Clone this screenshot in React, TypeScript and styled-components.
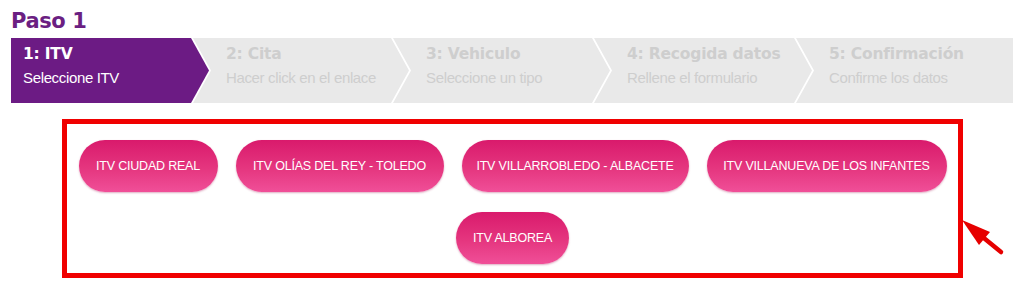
import React from 'react';
import styled, { createGlobalStyle } from 'styled-components';

const GlobalStyle = createGlobalStyle`
  html, body {
    margin: 0;
    padding: 0;
    background: #ffffff;
  }
  body {
    font-family: Tahoma, 'DejaVu Sans', 'Liberation Sans', sans-serif;
  }
`;

const Page = styled.div`
  width: 1024px;
  height: 289px;
  padding-top: 8px;
  box-sizing: border-box;
  overflow: hidden;
`;

const Title = styled.h2`
  margin: 0 0 3px 11px;
  font-family: 'DejaVu Sans', sans-serif;
  font-size: 21px;
  font-weight: 700;
  line-height: 27px;
  letter-spacing: -0.4px;
  color: #6b1f82;
`;

const Stepper = styled.div`
  display: flex;
  margin-left: 11px;
  width: 1002px;
  height: 65px;
`;

const ARROW = 18;

const Step = styled.div<{ $active?: boolean; $first?: boolean; $last?: boolean; $w: number }>`
  flex: 0 0 ${(p) => p.$w}px;
  margin-right: ${(p) => (p.$last ? 0 : -(ARROW - 2))}px;
  box-sizing: border-box;
  padding: 6px 0 0 ${(p) => (p.$first ? 12 : ARROW + 15)}px;
  background: ${(p) => (p.$active ? '#6c1b84' : '#e9e9e9')};
  color: ${(p) => (p.$active ? '#ffffff' : '#cecece')};
  clip-path: ${(p) =>
    p.$first
      ? `polygon(0 0, calc(100% - ${ARROW}px) 0, 100% 50%, calc(100% - ${ARROW}px) 100%, 0 100%)`
      : p.$last
      ? `polygon(0 0, 100% 0, 100% 100%, 0 100%, ${ARROW}px 50%)`
      : `polygon(0 0, calc(100% - ${ARROW}px) 0, 100% 50%, calc(100% - ${ARROW}px) 100%, 0 100%, ${ARROW}px 50%)`};
  position: relative;
  z-index: ${(p) => (p.$active ? 2 : 1)};
`;

const StepTitle = styled.div`
  font-family: 'DejaVu Sans', sans-serif;
  font-size: 15.5px;
  font-weight: 700;
  line-height: 21px;
  letter-spacing: -0.2px;
  white-space: nowrap;
`;

const StepText = styled.div`
  font-family: 'Liberation Sans', sans-serif;
  font-size: 15px;
  line-height: 20px;
  margin-top: 3px;
  letter-spacing: -0.35px;
  white-space: nowrap;
`;

const Frame = styled.div`
  position: relative;
  margin: 16px 0 0 62px;
  width: 901px;
  height: 159px;
  box-sizing: border-box;
  border: 5px solid #f00000;
  padding: 16px 0 0;
`;

const ButtonGrid = styled.div`
  display: flex;
  flex-wrap: wrap;
  justify-content: center;
  column-gap: 18px;
  row-gap: 20px;
`;

const ItvButton = styled.button<{ $w: number }>`
  width: ${(p) => p.$w}px;
  height: 52px;
  border: none;
  border-radius: 26px;
  background: linear-gradient(to bottom, #d91a6c 0%, #e5367f 55%, #f04f98 100%);
  box-shadow: 0 1px 2px rgba(160, 20, 80, 0.35);
  color: #ffffff;
  font-family: 'Liberation Sans', sans-serif;
  font-size: 12.5px;
  letter-spacing: -0.2px;
  text-transform: uppercase;
  white-space: nowrap;
  cursor: pointer;
`;

const Pointer = styled.svg`
  position: absolute;
  left: 893px;
  top: 93px;
  width: 50px;
  height: 45px;
  overflow: visible;
`;

const steps = [
  { title: '1: ITV', text: 'Seleccione ITV', w: 198 },
  { title: '2: Cita', text: 'Hacer click en el enlace', w: 216 },
  { title: '3: Vehiculo', text: 'Seleccione un tipo', w: 217 },
  { title: '4: Recogida datos', text: 'Rellene el formulario', w: 218 },
  { title: '5: Confirmación', text: 'Confirme los datos', w: 217 },
];

const itvs = [
  { name: 'ITV Ciudad Real', w: 139 },
  { name: 'ITV Olías del Rey - Toledo', w: 208 },
  { name: 'ITV Villarrobledo - Albacete', w: 227 },
  { name: 'ITV Villanueva de los Infantes', w: 240 },
  { name: 'ITV Alborea', w: 113 },
];

export default function App() {
  return (
    <Page>
      <GlobalStyle />
      <Title>Paso 1</Title>
      <Stepper>
        {steps.map((s, i) => (
          <Step
            key={s.title}
            $w={s.w}
            $active={i === 0}
            $first={i === 0}
            $last={i === steps.length - 1}
          >
            <StepTitle>{s.title}</StepTitle>
            <StepText>{s.text}</StepText>
          </Step>
        ))}
      </Stepper>
      <Frame>
        <ButtonGrid>
          {itvs.map((itv) => (
            <ItvButton key={itv.name} $w={itv.w}>
              {itv.name}
            </ItvButton>
          ))}
        </ButtonGrid>
        <Pointer viewBox="0 0 50 45">
          <line x1="41" y1="35" x2="14" y2="13" stroke="#e60000" strokeWidth="4.5" strokeLinecap="round" />
          <polygon points="2,3 30,15 19,28" fill="#e60000" />
        </Pointer>
      </Frame>
    </Page>
  );
}
